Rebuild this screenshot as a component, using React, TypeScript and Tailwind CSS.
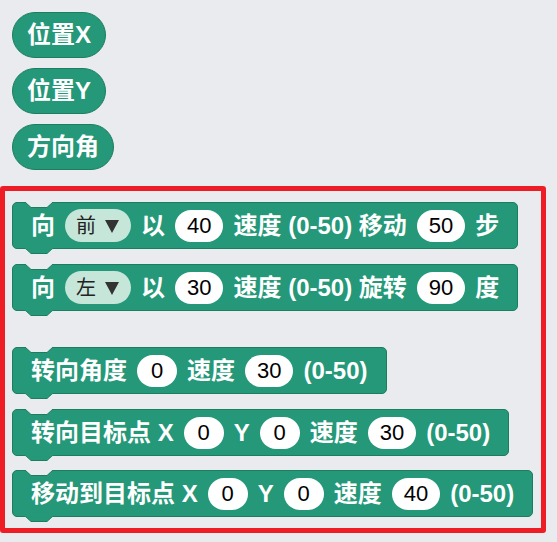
import React from "react";

const FONT = { fontFamily: '"Liberation Sans", "Noto Sans CJK SC", sans-serif' };

function Pill({ children }: { children: React.ReactNode }) {
  return (
    <div className="inline-flex h-[46px] items-center self-start rounded-full border border-[#1d7d61] bg-[#249878] px-[14px] text-[24px] font-bold text-white">
      {children}
    </div>
  );
}

function Num({ v }: { v: string }) {
  return (
    <div className="flex h-[32px] min-w-[40px] items-center justify-center rounded-full bg-white px-[12px] text-[22px] font-normal text-black">
      {v}
    </div>
  );
}

function Drop({ v }: { v: string }) {
  return (
    <div className="flex h-[33px] w-[66px] items-center gap-[9px] rounded-full bg-[#c6e6d9] pl-[11px] text-[20px] font-normal text-[#222]">
      <span>{v}</span>
      <svg width="14" height="14" viewBox="0 0 14 14">
        <path d="M0 1 L14 1 L7 14 Z" fill="#333" />
      </svg>
    </div>
  );
}

function T({ children }: { children: React.ReactNode }) {
  return <span className="whitespace-pre">{children}</span>;
}

function Block({ children, className = "" }: { children: React.ReactNode; className?: string }) {
  return (
    <div
      className={
        "relative flex h-[47px] items-center gap-[10px] self-start rounded-[5px] border border-[#1d7d61] bg-[#249878] pl-[18px] pr-[18px] text-[24px] font-bold text-white " +
        className
      }
    >
      <svg className="absolute left-[11px] top-[-1px]" width="30" height="7" viewBox="0 0 30 7">
        <path d="M1 0 L7 5.5 L23 5.5 L29 0 Z" fill="#eaebef" />
        <path d="M1 0 L7 5.5 L23 5.5 L29 0" fill="none" stroke="#1d7d61" strokeWidth="1" />
      </svg>
      <svg className="absolute bottom-[-7px] left-[11px]" width="30" height="7" viewBox="0 0 30 7">
        <path d="M1 0 L7 5.5 L23 5.5 L29 0 Z" fill="#249878" />
        <path d="M1 0 L7 5.5 L23 5.5 L29 0" fill="none" stroke="#1d7d61" strokeWidth="1" />
        <rect x="1.5" y="0" width="27" height="1.2" fill="#249878" />
      </svg>
      {children}
    </div>
  );
}

export default function App() {
  return (
    <div className="h-[542px] w-[557px] overflow-hidden bg-[#eaebef]" style={FONT}>
      <div className="flex flex-col gap-[10px] pl-[12px] pt-[12px]">
        <Pill>位置X</Pill>
        <Pill>位置Y</Pill>
        <Pill>方向角</Pill>
      </div>
      <div className="mt-[16px] flex h-[347px] w-[546px] flex-col rounded-[3px] border-[5px] border-[#ee1c24] pl-[7px] pt-[11px]">
        <Block>
          <T>向</T>
          <Drop v="前" />
          <T>以</T>
          <Num v="40" />
          <T>速度 (0-50) 移动</T>
          <Num v="50" />
          <T>步</T>
        </Block>
        <Block className="mt-[15px]">
          <T>向</T>
          <Drop v="左" />
          <T>以</T>
          <Num v="30" />
          <T>速度 (0-50) 旋转</T>
          <Num v="90" />
          <T>度</T>
        </Block>
        <Block className="mt-[36px]">
          <T>转向角度</T>
          <Num v="0" />
          <T>速度</T>
          <Num v="30" />
          <T>(0-50)</T>
        </Block>
        <Block className="mt-[15px]">
          <T>转向目标点 X</T>
          <Num v="0" />
          <T>Y</T>
          <Num v="0" />
          <T>速度</T>
          <Num v="30" />
          <T>(0-50)</T>
        </Block>
        <Block className="mt-[14px]">
          <T>移动到目标点 X</T>
          <Num v="0" />
          <T>Y</T>
          <Num v="0" />
          <T>速度</T>
          <Num v="40" />
          <T>(0-50)</T>
        </Block>
      </div>
    </div>
  );
}
